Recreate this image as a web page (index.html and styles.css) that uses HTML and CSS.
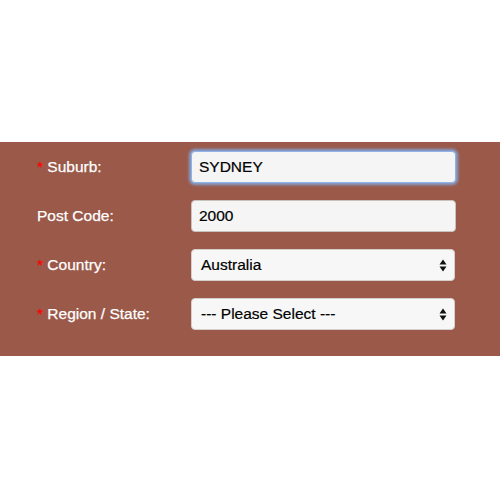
FILE: index.html
```html
<!DOCTYPE html>
<html>
<head>
<meta charset="utf-8">
<link rel="stylesheet" href="styles.css">
</head>
<body>
<div class="panel">
  <form class="form">
    <div class="row">
      <label class="label"><span class="req">*</span> Suburb:</label>
      <div class="field"><input class="input focus" type="text" value="SYDNEY"></div>
    </div>
    <div class="row">
      <label class="label">Post Code:</label>
      <div class="field"><input class="input" type="text" value="2000"></div>
    </div>
    <div class="row">
      <label class="label"><span class="req">*</span> Country:</label>
      <div class="field select-wrap">
        <div class="input select">Australia</div>
        <svg class="arrows" width="8" height="13" viewBox="0 0 8 13"><path d="M4 0.5 L7.5 5.5 L0.5 5.5 Z M0.5 7.5 L7.5 7.5 L4 12.5 Z" fill="#111"/></svg>
      </div>
    </div>
    <div class="row">
      <label class="label"><span class="req">*</span> Region / State:</label>
      <div class="field select-wrap">
        <div class="input select">--- Please Select ---</div>
        <svg class="arrows" width="8" height="13" viewBox="0 0 8 13"><path d="M4 0.5 L7.5 5.5 L0.5 5.5 Z M0.5 7.5 L7.5 7.5 L4 12.5 Z" fill="#111"/></svg>
      </div>
    </div>
  </form>
</div>
</body>
</html>
```
FILE: styles.css
```css
html, body {
  margin: 0;
  padding: 0;
  background: #ffffff;
  font-family: "Liberation Sans", Arial, sans-serif;
}
.panel {
  margin-top: 142px;
  height: 214px;
  background: #9a5949;
  box-sizing: border-box;
  padding: 9px 0 0 37px;
}
.form {
  display: flex;
  flex-direction: column;
  gap: 17px;
}
.row {
  display: flex;
  align-items: center;
  height: 32px;
}
.label {
  width: 154px;
  color: #ffffff;
  font-size: 15.5px;
  -webkit-text-stroke: 0.25px #ffffff;
}
.req {
  color: #ff0000;
  -webkit-text-stroke: 0.25px #ff0000;
}
.field {
  width: 265px;
  height: 32px;
}
.select-wrap {
  position: relative;
  width: 264px;
}
.input {
  box-sizing: border-box;
  width: 100%;
  height: 32px;
  margin: 0;
  padding: 0 7px;
  border: 1px solid #c9c3c0;
  border-radius: 4px;
  background: #f5f5f5;
  color: #000;
  font-family: "Liberation Sans", Arial, sans-serif;
  font-size: 15.5px;
  -webkit-text-stroke: 0.2px #000;
  outline: none;
  display: flex;
  align-items: center;
}
.select {
  padding-left: 9px;
  background: #f7f7f7;
  border-color: #d4cfcc;
}
.focus {
  border: 1px solid #8fb3e6;
  box-shadow: 0 0 3px 2px rgba(130, 175, 235, 0.85);
}
.arrows {
  position: absolute;
  right: 8px;
  top: 10px;
}
```
